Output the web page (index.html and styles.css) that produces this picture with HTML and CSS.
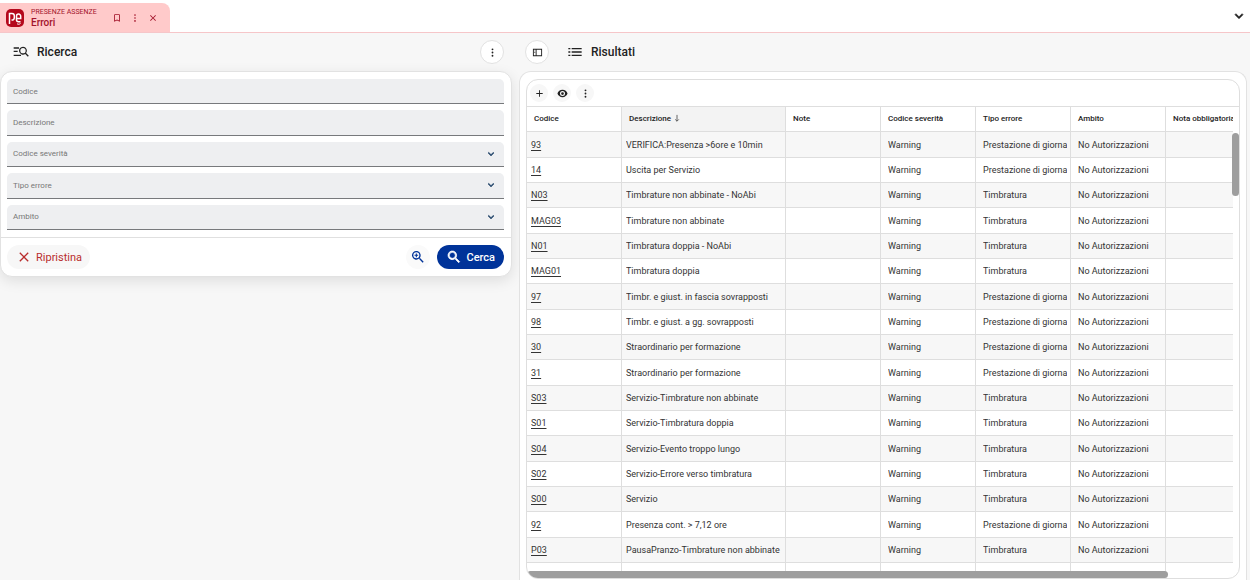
FILE: index.html
```html
<!DOCTYPE html>
<html lang="it">
<head>
<meta charset="utf-8">
<title>Errori</title>
<link rel="stylesheet" href="styles.css">
</head>
<body>
<svg class="defs" aria-hidden="true">
  <symbol id="dots" viewBox="0 0 24 24"><circle cx="12" cy="5" r="2"/><circle cx="12" cy="12" r="2"/><circle cx="12" cy="19" r="2"/></symbol>
  <symbol id="close" viewBox="0 0 24 24"><path d="M19 6.4 17.6 5 12 10.6 6.4 5 5 6.4 10.6 12 5 17.600 6.400 19 12 13.400 17.600 19 19 17.600 13.400 12z"/></symbol>
  <symbol id="chevron" viewBox="0 0 24 24"><path d="M7.400 8.600 12 13.200l4.600-4.600L18 10l-6 6-6-6z"/></symbol>
</svg>
<header class="tabs">
  <div class="tab">
    <svg class="logo" viewBox="0 0 18 18" aria-hidden="true"><rect width="18" height="18" rx="5" fill="#b5081c"/><g fill="none" stroke="#fff" stroke-width="1.500"><path d="M3.500 15V4.500h2.500a2.300 2.300 0 0 1 2.300 2.300v2a2.300 2.300 0 0 1-2.300 2.300H5.500"/><path d="M10.500 9.500h4.200V7.200a2 2 0 0 0-4.200 0v3.600a2 2 0 0 0 2 2h2"/><path d="M11 14.700c1 .8 2.600.8 3.600-.4" stroke-width="1"/></g></svg>
    <div class="tab-text"><span class="tab-app">PRESENZE ASSENZE</span><span class="tab-name">Errori</span></div>
    <div class="tab-actions">
      <button aria-label="Segnalibro"><svg viewBox="0 0 24 24"><path d="M17 3H7a2 2 0 0 0-2 2v16l7-3 7 3V5a2 2 0 0 0-2-2zm0 15-5-2.200L7 18V5h10z"/></svg></button>
      <button aria-label="Menu scheda"><svg><use href="#dots"/></svg></button>
      <button aria-label="Chiudi"><svg><use href="#close"/></svg></button>
    </div>
  </div>
  <button class="tabs-more" aria-label="Tutte le schede"><svg><use href="#chevron"/></svg></button>
</header>
<main class="layout">
  <section class="column">
    <div class="heading search-heading">
      <svg class="heading-icon" viewBox="0 0 24 24"><path d="M1 5h8v2H1zm0 5h6v2H1zm0 8v-2h11v2zM15 4a6 6 0 1 0 3.300 11l4 4 1.400-1.400-4-4A6 6 0 0 0 15 4zm0 2a4 4 0 1 1 0 8 4 4 0 0 1 0-8z"/></svg>
      <h2>Ricerca</h2>
      <button class="round" aria-label="Opzioni ricerca"><svg><use href="#dots"/></svg></button>
    </div>
    <form class="panel search">
      <div class="fields">
        <div class="field"><label for="codice">Codice</label><input id="codice" type="text"></div>
        <div class="field"><label for="descrizione">Descrizione</label><input id="descrizione" type="text"></div>
        <div class="field"><label for="severita">Codice severità</label><select id="severita"><option></option></select><svg><use href="#chevron"/></svg></div>
        <div class="field"><label for="tipo">Tipo errore</label><select id="tipo"><option></option></select><svg><use href="#chevron"/></svg></div>
        <div class="field"><label for="ambito">Ambito</label><select id="ambito"><option></option></select><svg><use href="#chevron"/></svg></div>
      </div>
      <div class="actions">
        <button class="reset" type="reset"><svg><use href="#close"/></svg>Ripristina</button>
        <button class="zoom" type="button" aria-label="Ricerca avanzata"><svg viewBox="0 0 24 24"><path d="M15.500 14h-.8l-.3-.3A6.500 6.500 0 1 0 13.700 14.400l.3.300v.8l5 5 1.500-1.500zm-6 0a4.500 4.500 0 1 1 0-9 4.500 4.500 0 0 1 0 9zm.8-7.200H8.700v1.900H6.800v1.600h1.900v1.900h1.600v-1.900h1.900V8.700h-1.900z"/></svg></button>
        <button class="submit" type="button"><svg viewBox="0 0 24 24"><path d="M15.500 14h-.8l-.3-.3A6.500 6.500 0 1 0 13.700 14.400l.3.300v.8l5 5 1.500-1.500zm-6 0a4.500 4.500 0 1 1 0-9 4.500 4.500 0 0 1 0 9z"/></svg>Cerca</button>
      </div>
    </form>
  </section>
  <section class="column">
    <div class="heading results-heading">
      <button class="round" aria-label="Mostra pannello"><svg viewBox="0 0 24 24"><path fill-rule="evenodd" d="M2 4h20v16H2zm2 2v12h4V6zm6 0v12h10V6zM5 8h2v1.500H5zm0 3h2v1.500H5z"/></svg></button>
      <svg class="heading-icon list-icon" viewBox="0 0 24 24"><path d="M2 6h3v2H2zm5 0h15v2H7zM2 11h3v2H2zm5 0h15v2H7zM2 16h3v2H2zm5 0h15v2H7z"/></svg>
      <h2>Risultati</h2>
    </div>
    <div class="panel results">
      <div class="grid-card">
        <div class="toolbar">
          <button aria-label="Aggiungi"><svg viewBox="0 0 24 24"><path d="M19 13h-6v6h-2v-6H5v-2h6V5h2v6h6z"/></svg></button>
          <button aria-label="Visualizza"><svg viewBox="0 0 24 24"><path fill-rule="evenodd" d="M12 4C6.500 4 2.500 7.500 1 12c1.500 4.500 5.500 8 11 8s9.500-3.500 11-8c-1.500-4.500-5.500-8-11-8zm0 13.500a5.500 5.500 0 1 1 0-11 5.500 5.500 0 0 1 0 11zM12 9a3 3 0 1 0 0 6 3 3 0 0 0 0-6z"/></svg></button>
          <button aria-label="Altro"><svg><use href="#dots"/></svg></button>
        </div>
        <div class="scroller">
          <table>
            <colgroup><col class="c"><col class="d"><col class="c"><col class="c"><col class="c"><col class="c"><col class="n"></colgroup>
            <thead><tr><th>Codice</th><th class="sorted">Descrizione <svg viewBox="0 0 8 10"><path d="M4 1v7M2 6l2 2 2-2" fill="none" stroke="#555"/></svg></th><th>Note</th><th>Codice severità</th><th>Tipo errore</th><th>Ambito</th><th>Nota obbligatoria</th></tr></thead>
            <tbody id="rows"></tbody>
          </table>
        </div>
        <div class="thumb-y"></div>
        <div class="thumb-x"></div>
      </div>
    </div>
  </section>
</main>
<script src="rows.js"></script>
</body>
</html>
```
FILE: styles.css
```css
* { box-sizing: border-box; }
body { margin: 0; height: 100vh; display: flex; flex-direction: column; overflow: hidden; background: #f7f7f7; color: #222; font-family: Roboto, "Liberation Sans", sans-serif; }
button { border: 0; padding: 0; background: none; color: inherit; font: inherit; display: flex; align-items: center; justify-content: center; }
svg { fill: currentColor; flex: none; }
.defs { display: none; }

.tabs { flex: none; height: 33px; display: flex; align-items: flex-end; justify-content: space-between; background: #fff; border-bottom: 1px solid #f6c6c9; }
.tab { height: 29px; width: 170px; padding: 0 12px 0 6px; display: flex; align-items: center; gap: 7px; background: #ffcaca; color: #a3142a; border-radius: 0 8px 0 0; }
.logo { width: 18px; height: 18px; }
.tab-text { display: flex; flex-direction: column; white-space: nowrap; }
.tab-app { font-size: 7px; line-height: 9px; }
.tab-name { font-size: 10px; line-height: 11px; font-weight: 500; }
.tab-actions { display: flex; gap: 8px; margin-left: auto; }
.tab-actions svg { width: 10px; height: 10px; }
.tabs-more { width: 22px; height: 32px; }
.tabs-more svg { width: 16px; height: 16px; stroke: currentColor; }

.layout { flex: 1; min-height: 0; display: grid; grid-template-columns: 512fr 728fr; gap: 7px; padding-right: 3px; }
.column { min-width: 0; min-height: 0; display: flex; flex-direction: column; }
.heading { flex: none; height: 38px; display: flex; align-items: center; }
.heading h2 { margin: 0; font-size: 12px; line-height: 16px; font-weight: 500; }
.heading-icon { width: 16px; height: 16px; }
.search-heading { padding: 0 8px 0 13px; gap: 8px; }
.search-heading .round { margin-left: auto; }
.results-heading { padding-left: 6px; }
.list-icon { margin: 0 8px 0 18px; }
.round { width: 24px; height: 24px; border-radius: 50%; border: 1px solid #e2e2e2; background: #fff; }
.round svg { width: 11px; height: 11px; }

.panel { background: #fff; border: 1px solid #e2e2e2; border-radius: 12px; }
.search { box-shadow: 0 4px 14px #0000001a; }
.fields { min-height: 166px; display: grid; grid-auto-rows: 1fr; gap: 6px; padding: 7px 7px 7px 6px; border-bottom: 1px solid #e0e0e0; }
.field { display: flex; align-items: center; padding: 0 7px 0 6px; background: #eeeff1; border-bottom: 1px solid #77797c; border-radius: 5px 5px 0 0; color: #777; font-size: 8px; }
.field input, .field select { flex: 1; min-width: 0; height: 20px; border: 0; outline: 0; background: none; appearance: none; font: inherit; }
.field svg { width: 12px; height: 12px; color: #24466b; stroke: currentColor; stroke-width: 1px; }
.actions { display: flex; align-items: center; padding: 7px 7px 7px 6px; font-size: 11px; }
.reset { height: 24px; padding: 0 8px 0 9px; gap: 4px; border-radius: 12px; background: #f7f7f7; color: #b92d2d; }
.reset svg { width: 16px; height: 16px; }
.zoom { width: 24px; height: 24px; margin: 0 7px 0 auto; border-radius: 50%; background: #fafafa; color: #003399; }
.zoom svg { width: 16px; height: 16px; }
.submit { height: 24px; padding: 0 9px; gap: 4px; border-radius: 12px; background: #003399; color: #fff; font-weight: 500; }
.submit svg { width: 16px; height: 16px; stroke: currentColor; stroke-width: 1px; }

.results { flex: 1; min-height: 0; padding: 7px 6px 1px; border-bottom: 0; border-radius: 12px 12px 0 0; }
.grid-card { position: relative; height: 100%; display: flex; flex-direction: column; overflow: hidden; border: 1px solid #dedede; border-radius: 12px; }
.toolbar { flex: none; height: 27px; display: flex; align-items: center; gap: 5px; padding-left: 3px; border-bottom: 1px solid #dedede; }
.toolbar button { width: 18px; height: 18px; border-radius: 50%; background: #f7f7f7; }
.toolbar svg { width: 11px; height: 11px; }
.scroller { flex: 1; min-height: 0; margin-right: 6px; overflow: hidden; }
table { width: 780px; table-layout: fixed; border-collapse: separate; border-spacing: 0; }
.c { width: 95px; }
.d { width: 164px; }
.n { width: 141px; }
th, td { height: 25px; padding: 0 3px 0 7px; border-right: 1px solid #dedede; border-bottom: 1px solid #dedede; text-align: left; white-space: nowrap; }
th { font-size: 8px; line-height: 12px; font-weight: 500; }
th svg { width: 8px; height: 9px; vertical-align: middle; }
.sorted { background: #f3f3f3; }
td { font-size: 9px; line-height: 12px; color: #333; }
td div { overflow: hidden; }
td:nth-child(-n+2) { padding-left: 4px; }
tr:nth-child(3n+1) td { height: 26px; }
tbody tr:nth-child(odd) { background: #f7f7f7; }
td a { color: inherit; text-decoration: underline; text-underline-offset: 2px; }
.thumb-y { position: absolute; right: 0; top: 53px; width: 7px; height: 63px; border-radius: 4px; background: #9e9e9e; }
.thumb-x { position: absolute; left: 0; bottom: 0; width: 90%; height: 7px; border-radius: 4px; background: #9e9e9e; }
```
FILE: rows.js
```js
const P = "Prestazione di giornata", T = "Timbratura";
const data = [
  ["93", "VERIFICA:Presenza >6ore e 10min", P],
  ["14", "Uscita per Servizio", P],
  ["N03", "Timbrature non abbinate - NoAbi", T],
  ["MAG03", "Timbrature non abbinate", T],
  ["N01", "Timbratura doppia - NoAbi", T],
  ["MAG01", "Timbratura doppia", T],
  ["97", "Timbr. e giust. in fascia sovrapposti", P],
  ["98", "Timbr. e giust. a gg. sovrapposti", P],
  ["30", "Straordinario per formazione", P],
  ["31", "Straordinario per formazione", P],
  ["S03", "Servizio-Timbrature non abbinate", T],
  ["S01", "Servizio-Timbratura doppia", T],
  ["S04", "Servizio-Evento troppo lungo", T],
  ["S02", "Servizio-Errore verso timbratura", T],
  ["S00", "Servizio", T],
  ["92", "Presenza cont. > 7,12 ore", P],
  ["P03", "PausaPranzo-Timbrature non abbinate", T],
  null
];
const body = document.getElementById("rows");
for (const row of data) {
  const tr = body.insertRow();
  const cells = row ? [row[0], row[1], "", "Warning", row[2], "No Autorizzazioni", ""] : Array(7).fill("");
  cells.forEach((text, i) => {
    const box = document.createElement(i === 0 && row ? "a" : "div");
    box.textContent = text;
    if (box.tagName === "A") box.href = "#";
    tr.insertCell().append(box);
  });
}
```
